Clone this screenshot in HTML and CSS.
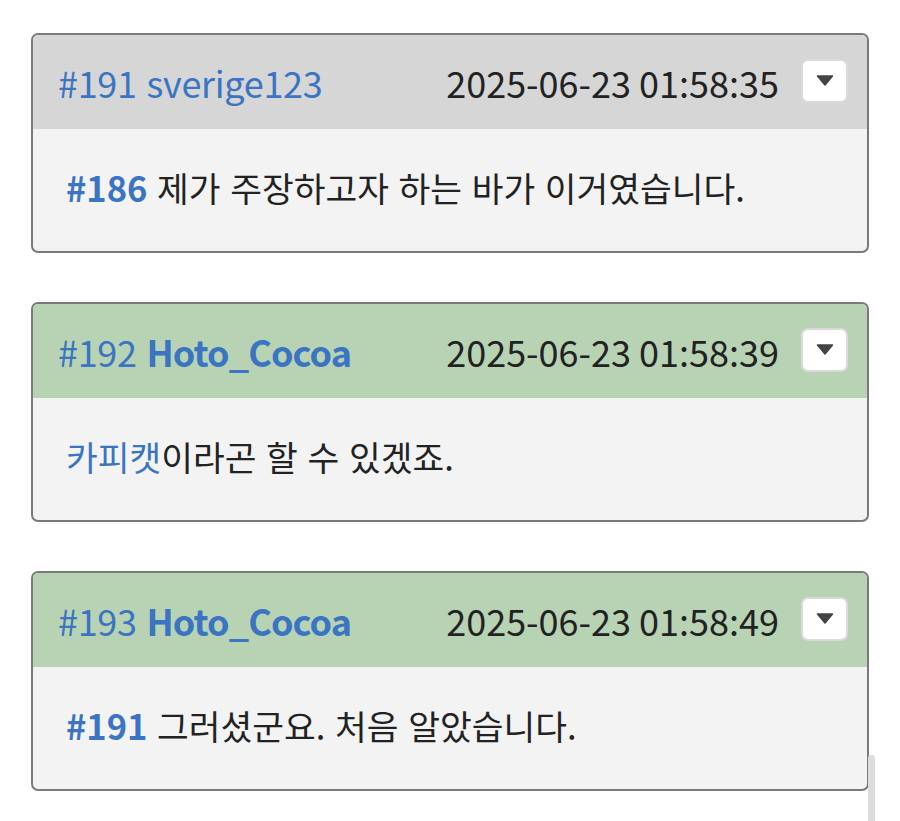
FILE: index.html
```html
<!DOCTYPE html>
<html lang="ko">
<head>
<meta charset="utf-8"/>
<meta name="viewport" content="width=device-width,initial-scale=1"/>
<title>토론 댓글</title>
<link rel="stylesheet" href="styles.css">
</head>
<body>
<div class="thread">
  <div class="res">
    <div class="res-head">
      <div class="who"><a class="num" href="#r191">#191</a> <a class="user" href="#">sverige123</a></div>
      <div class="meta">
        <span class="time" lang="en">2025-06-23 01:58:35</span>
        <button class="menu" type="button"><svg width="18" height="11" viewBox="0 0 18 11"><path d="M1.5 1h15l-7.5 9z" fill="#444" stroke="#444" stroke-width="1.5" stroke-linejoin="round"/></svg></button>
      </div>
    </div>
    <div class="res-body"><a class="ref" href="#r186">#186</a> 제가 주장하고자 하는 바가 이거였습니다.</div>
  </div>

  <div class="res mine">
    <div class="res-head">
      <div class="who"><a class="num" href="#r192">#192</a> <a class="user strong" href="#">Hoto_Cocoa</a></div>
      <div class="meta">
        <span class="time" lang="en">2025-06-23 01:58:39</span>
        <button class="menu" type="button"><svg width="18" height="11" viewBox="0 0 18 11"><path d="M1.5 1h15l-7.5 9z" fill="#444" stroke="#444" stroke-width="1.5" stroke-linejoin="round"/></svg></button>
      </div>
    </div>
    <div class="res-body"><a class="wiki" href="#">카피캣</a>이라곤 할 수 있겠죠.</div>
  </div>

  <div class="res mine">
    <div class="res-head">
      <div class="who"><a class="num" href="#r193">#193</a> <a class="user strong" href="#">Hoto_Cocoa</a></div>
      <div class="meta">
        <span class="time" lang="en">2025-06-23 01:58:49</span>
        <button class="menu" type="button"><svg width="18" height="11" viewBox="0 0 18 11"><path d="M1.5 1h15l-7.5 9z" fill="#444" stroke="#444" stroke-width="1.5" stroke-linejoin="round"/></svg></button>
      </div>
    </div>
    <div class="res-body"><a class="ref" href="#r191">#191</a> 그러셨군요. 처음 알았습니다.</div>
  </div>
</div>
<div class="scroll-thumb"></div>
</body>
</html>
```

FILE: styles.css
```css
body{margin:0;background:#fff;color:#222;font-family:"Noto Sans CJK KR","Noto Sans",sans-serif}
a{text-decoration:none;color:#3a74c3}
.thread{padding:33px 31px 0 31px;display:flex;flex-direction:column;gap:49px}
.res{border:2px solid #7a7a7a;border-radius:7px;overflow:hidden;background:#f3f3f3}
.res-head{display:flex;justify-content:space-between;align-items:center;height:94px;padding:0 19px 0 25px;background:#d6d6d6;font-size:36px}
.res.mine .res-head{background:#b7d3b4}
.who{letter-spacing:-.3px}
.user.strong{font-weight:700;letter-spacing:-.9px}
.meta{display:flex;align-items:center;gap:22px}
.time{color:#222}
.menu{width:47px;height:44px;display:flex;align-items:center;justify-content:center;background:#fff;border:2px solid #dadada;border-radius:7px;padding:0;margin-bottom:3px}
.res-body{padding:35px 33px 40px 33px;font-size:34.5px;line-height:47px}
.ref{font-weight:700}
.scroll-thumb{position:fixed;right:25px;bottom:0;width:7px;height:66px;background:#dcdcdc;border-radius:3px 3px 0 0}
```
